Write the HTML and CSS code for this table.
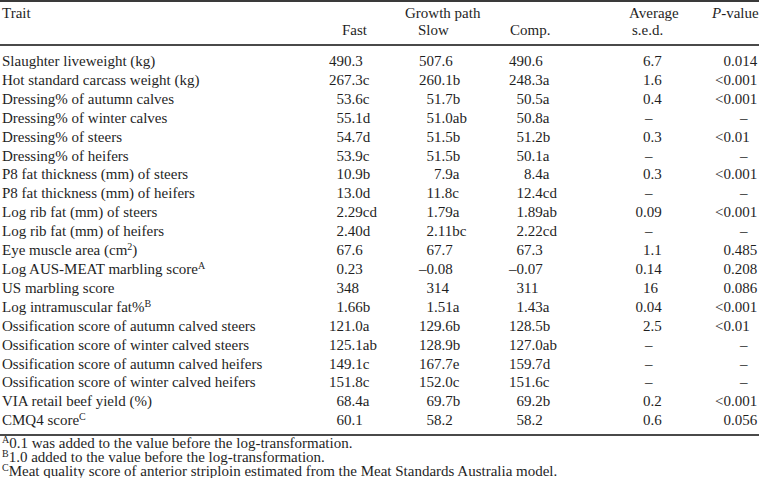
FILE: index.html
```html
<!DOCTYPE html>
<html>
<head>
<meta charset="utf-8">
<link rel="stylesheet" href="styles.css">
</head>
<body>
<table class="data">
  <colgroup>
    <col class="c-trait"><col class="c-fast"><col class="c-slow"><col class="c-comp"><col class="c-avg"><col class="c-p">
  </colgroup>
  <thead>
    <tr class="h1">
      <th class="t-trait">Trait</th>
      <th class="t-gp" colspan="3">Growth path</th>
      <th class="t-avg">Average</th>
      <th class="t-p"><i>P</i>-value</th>
    </tr>
    <tr class="h2">
      <th></th>
      <th class="t-fast">Fast</th>
      <th class="t-slow">Slow</th>
      <th class="t-comp">Comp.</th>
      <th class="t-sed">s.e.d.</th>
      <th></th>
    </tr>
  </thead>
  <tbody>
    <tr><td>Slaughter liveweight (kg)</td><td>490.3</td><td>507.6</td><td>490.6</td><td class="d2">6.7</td><td class="v">0.014</td></tr>
    <tr><td>Hot standard carcass weight (kg)</td><td>267.3c</td><td>260.1b</td><td>248.3a</td><td class="d2">1.6</td><td class="lt">&lt;0.001</td></tr>
    <tr><td>Dressing% of autumn calves</td><td class="d3">53.6c</td><td class="d3">51.7b</td><td class="d3">50.5a</td><td class="d2">0.4</td><td class="lt">&lt;0.001</td></tr>
    <tr><td>Dressing% of winter calves</td><td class="d3">55.1d</td><td class="d3">51.0ab</td><td class="d3">50.8a</td><td class="dash">–</td><td class="dash">–</td></tr>
    <tr><td>Dressing% of steers</td><td class="d3">54.7d</td><td class="d3">51.5b</td><td class="d3">51.2b</td><td class="d2">0.3</td><td class="lt">&lt;0.01</td></tr>
    <tr><td>Dressing% of heifers</td><td class="d3">53.9c</td><td class="d3">51.5b</td><td class="d3">50.1a</td><td class="dash">–</td><td class="dash">–</td></tr>
    <tr><td>P8 fat thickness (mm) of steers</td><td class="d3">10.9b</td><td class="d2">7.9a</td><td class="d2">8.4a</td><td class="d2">0.3</td><td class="lt">&lt;0.001</td></tr>
    <tr><td>P8 fat thickness (mm) of heifers</td><td class="d3">13.0d</td><td class="d3">11.8c</td><td class="d3">12.4cd</td><td class="dash">–</td><td class="dash">–</td></tr>
    <tr><td>Log rib fat (mm) of steers</td><td class="d3">2.29cd</td><td class="d3">1.79a</td><td class="d3">1.89ab</td><td class="d3">0.09</td><td class="lt">&lt;0.001</td></tr>
    <tr><td>Log rib fat (mm) of heifers</td><td class="d3">2.40d</td><td class="d3">2.11bc</td><td class="d3">2.22cd</td><td class="dash">–</td><td class="dash">–</td></tr>
    <tr><td>Eye muscle area (cm<sup>2</sup>)</td><td class="d3">67.6</td><td class="d3">67.7</td><td class="d3">67.3</td><td class="d2">1.1</td><td class="v">0.485</td></tr>
    <tr><td>Log AUS-MEAT marbling score<sup>A</sup></td><td class="d3">0.23</td><td>–0.08</td><td>–0.07</td><td class="d3">0.14</td><td class="v">0.208</td></tr>
    <tr><td>US marbling score</td><td class="d3">348</td><td class="d3">314</td><td class="d3">311</td><td class="d2">16</td><td class="v">0.086</td></tr>
    <tr><td>Log intramuscular fat%<sup>B</sup></td><td class="d3">1.66b</td><td class="d3">1.51a</td><td class="d3">1.43a</td><td class="d3">0.04</td><td class="lt">&lt;0.001</td></tr>
    <tr><td>Ossification score of autumn calved steers</td><td>121.0a</td><td>129.6b</td><td>128.5b</td><td class="d2">2.5</td><td class="lt">&lt;0.01</td></tr>
    <tr><td>Ossification score of winter calved steers</td><td>125.1ab</td><td>128.9b</td><td>127.0ab</td><td class="dash">–</td><td class="dash">–</td></tr>
    <tr><td>Ossification score of autumn calved heifers</td><td>149.1c</td><td>167.7e</td><td>159.7d</td><td class="dash">–</td><td class="dash">–</td></tr>
    <tr><td>Ossification score of winter calved heifers</td><td>151.8c</td><td>152.0c</td><td>151.6c</td><td class="dash">–</td><td class="dash">–</td></tr>
    <tr><td>VIA retail beef yield (%)</td><td class="d3">68.4a</td><td class="d3">69.7b</td><td class="d3">69.2b</td><td class="d2">0.2</td><td class="lt">&lt;0.001</td></tr>
    <tr><td>CMQ4 score<sup>C</sup></td><td class="d3">60.1</td><td class="d3">58.2</td><td class="d3">58.2</td><td class="d2">0.6</td><td class="v">0.056</td></tr>
  </tbody>
</table>
<div class="notes">
  <p><sup>A</sup>0.1 was added to the value before the log-transformation.</p>
  <p><sup>B</sup>1.0 added to the value before the log-transformation.</p>
  <p><sup>C</sup>Meat quality score of anterior striploin estimated from the Meat Standards Australia model.</p>
</div>
</body>
</html>
```

FILE: styles.css
```css
html, body {
  margin: 0;
  padding: 0;
  background: #ffffff;
}

body {
  font-family: "Liberation Serif", "Times New Roman", serif;
  font-size: 15px;
  color: #1f1f1f;
  width: 759px;
}

.data {
  border-collapse: collapse;
  table-layout: fixed;
  width: 759px;
}

.c-trait { width: 318px; }
.c-fast  { width: 87px; }
.c-slow  { width: 90px; }
.c-comp  { width: 105px; }
.c-avg   { width: 90px; }
.c-p     { width: 69px; }

.data th,
.data td {
  padding: 0;
  font-weight: normal;
  text-align: left;
  white-space: nowrap;
  vertical-align: baseline;
}

/* header */
.h1 th {
  border-top: 2px solid #3a3a3a;
  padding-top: 3px;
  line-height: 17px;
}
.h2 th {
  border-bottom: 2px solid #4a4a4a;
  padding-bottom: 5px;
  line-height: 17px;
}
.t-trait { padding-left: 2px !important; }
.t-gp    { padding-left: 87px !important; }
.t-avg   { padding-left: 29px !important; }
.t-p     { padding-left: 22px !important; }
.t-fast  { padding-left: 24px !important; }
.t-slow  { padding-left: 13px !important; }
.t-comp  { padding-left: 15px !important; }
.t-sed   { padding-left: 32px !important; }
.t-p i   { font-style: italic; }

/* body */
.data tbody td {
  line-height: 18.9px;
  --ind: 0px;
}
.data tbody tr:first-child td { padding-top: 6px; }
.data tbody tr:last-child td {
  padding-bottom: 4px;
  border-bottom: 2px solid #4a4a4a;
}

.data tbody td:nth-child(1) { padding-left: 2px; }
.data tbody td:nth-child(2) { padding-left: calc(11px + var(--ind)); }
.data tbody td:nth-child(3) { padding-left: calc(14px + var(--ind)); }
.data tbody td:nth-child(4) { padding-left: calc(14px + var(--ind)); }
.data tbody td:nth-child(5) { padding-left: calc(28px + var(--ind)); }
.data tbody td:nth-child(6) { padding-left: 33.5px; }

.data tbody td.d3 { --ind: 7.5px; }
.data tbody td.d2 { --ind: 15px; }
.data tbody td:nth-child(5).dash { padding-left: 45px; }
.data tbody td:nth-child(6).lt { padding-left: 25px; }
.data tbody td:nth-child(6).v { padding-left: 33.5px; }
.data tbody td:nth-child(6).dash { padding-left: 50px; }

sup {
  font-size: 10px;
  line-height: 0;
  vertical-align: 5px;
}

/* footnotes */
.notes {
  padding-left: 2px;
}
.notes p {
  margin: 0;
  line-height: 14px;
  white-space: nowrap;
}
```
